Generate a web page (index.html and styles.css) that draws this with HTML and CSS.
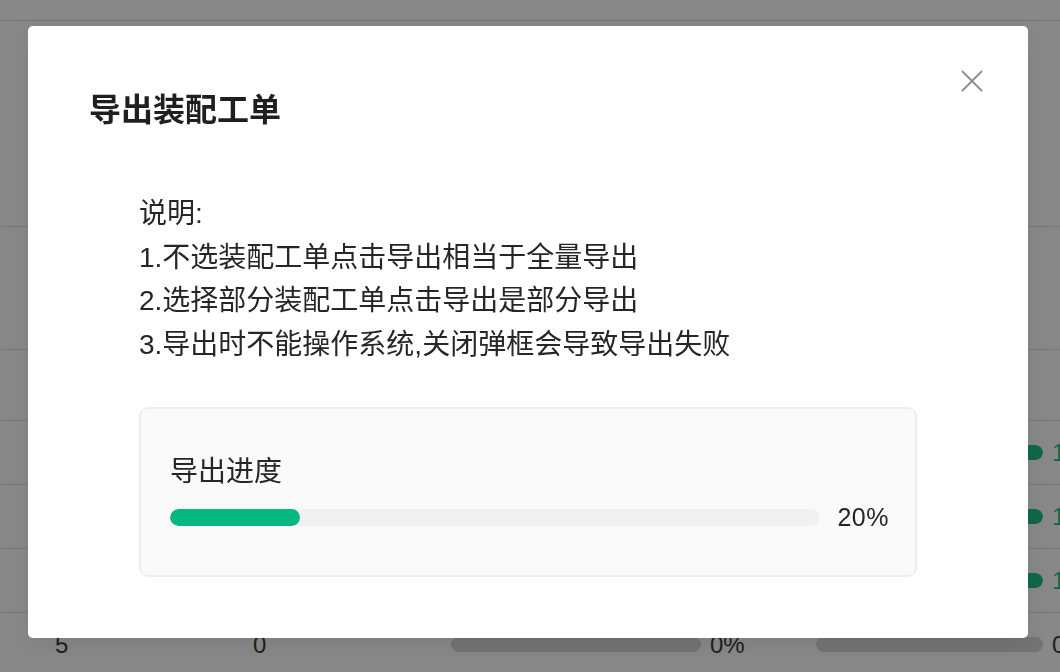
FILE: index.html
```html
<!DOCTYPE html>
<html lang="zh-CN">
<head>
<meta charset="utf-8">
<title>导出装配工单</title>
<link rel="stylesheet" href="styles.css">
</head>
<body>
<div class="page">
  <div class="table">
    <div class="row row-top"></div>
    <div class="row row-a"></div>
    <div class="row row-b"></div>
    <div class="row row-c"></div>
    <div class="row">
      <span class="cell"></span><span class="cell"></span>
      <span class="bar"><span class="bar-fill" style="width:100%"></span></span><span class="pct done"></span>
      <span class="bar"><span class="bar-fill" style="width:100%"></span></span><span class="pct done">100%</span>
    </div>
    <div class="row">
      <span class="cell"></span><span class="cell"></span>
      <span class="bar"><span class="bar-fill" style="width:100%"></span></span><span class="pct done"></span>
      <span class="bar"><span class="bar-fill" style="width:100%"></span></span><span class="pct done">100%</span>
    </div>
    <div class="row">
      <span class="cell"></span><span class="cell"></span>
      <span class="bar"><span class="bar-fill" style="width:100%"></span></span><span class="pct done"></span>
      <span class="bar"><span class="bar-fill" style="width:100%"></span></span><span class="pct done">100%</span>
    </div>
    <div class="row">
      <span class="cell">5</span><span class="cell">0</span>
      <span class="bar"><span class="bar-fill" style="width:0%"></span></span><span class="pct">0%</span>
      <span class="bar"><span class="bar-fill" style="width:0%"></span></span><span class="pct">0%</span>
    </div>
  </div>
</div>

<div class="mask"></div>

<div class="dialog">
  <button class="close" aria-label="关闭">
    <svg width="22" height="22" viewBox="0 0 22 22"><path d="M1.5 1.5 L20.5 20.5 M20.5 1.5 L1.5 20.5" stroke="#8c8c8c" stroke-width="1.8" fill="none" stroke-linecap="round"/></svg>
  </button>
  <h2 class="dialog-title">导出装配工单</h2>
  <div class="dialog-body">
    <div class="notes">
      <p>说明:</p>
      <p>1.不选装配工单点击导出相当于全量导出</p>
      <p>2.选择部分装配工单点击导出是部分导出</p>
      <p>3.导出时不能操作系统,关闭弹框会导致导出失败</p>
    </div>
    <div class="progress-box">
      <div class="progress-label">导出进度</div>
      <div class="progress-row">
        <div class="track"><div class="fill" style="width:20%"></div></div>
        <span class="progress-pct">20%</span>
      </div>
    </div>
  </div>
</div>
</body>
</html>
```

FILE: styles.css
```css
* { box-sizing: border-box; }

html, body {
  margin: 0;
  padding: 0;
  width: 1060px;
  height: 672px;
  overflow: hidden;
  background: #ffffff;
  font-family: "Liberation Sans", "Noto Sans CJK SC", sans-serif;
}

.page {
  width: 1060px;
  height: 672px;
}

.table {
  display: flex;
  flex-direction: column;
}

.row {
  height: 64px;
  border-bottom: 1px solid #e1e1e1;
  display: grid;
  grid-template-columns: 198px 198px 250px 115px 227px 1fr;
  align-items: center;
  padding-left: 55px;
  font-size: 24px;
  color: #3a3a3a;
  flex-shrink: 0;
}

.row-top { height: 21px; }
.row-a { height: 206px; }
.row-b { height: 123px; }
.row-c { height: 71px; }

.bar {
  height: 15px;
  border-radius: 8px;
  background: #d9d9d9;
  overflow: hidden;
  display: block;
}

.bar-fill {
  display: block;
  height: 100%;
  background: #1dc687;
  border-radius: 8px;
}

.pct {
  padding-left: 9px;
  white-space: nowrap;
  overflow: hidden;
}

.pct.done { color: #1dc687; }

.mask {
  position: fixed;
  inset: 0;
  background: rgba(0, 0, 0, 0.465);
}

.dialog {
  position: absolute;
  left: 28px;
  top: 26px;
  width: 1000px;
  height: 612px;
  background: #ffffff;
  border-radius: 5px;
  padding: 64px 61px 61px;
  box-shadow: 0 6px 24px rgba(0, 0, 0, 0.08);
}

.close {
  position: absolute;
  top: 44px;
  right: 45px;
  width: 22px;
  height: 22px;
  padding: 0;
  border: 0;
  background: transparent;
  display: flex;
}

.dialog-title {
  margin: 0;
  font-size: 32px;
  line-height: 40px;
  font-weight: 700;
  color: #1f1f1f;
}

.dialog-body {
  margin: 62px 50px 0;
}

.notes {
  font-size: 28px;
  line-height: 43.5px;
  color: #262626;
}

.notes p { margin: 0; }

.progress-box {
  margin-top: 41px;
  height: 170px;
  border: 2px solid #eeeeee;
  border-radius: 9px;
  background: #fafafa;
  padding: 45px 26px 42px 29px;
}

.progress-label {
  font-size: 28px;
  line-height: 36px;
  color: #262626;
}

.progress-row {
  margin-top: 12px;
  height: 31px;
  display: flex;
  align-items: center;
}

.track {
  flex: 1;
  height: 17px;
  border-radius: 9px;
  background: #f1f1f1;
  overflow: hidden;
}

.fill {
  height: 100%;
  background: #05b87f;
  border-radius: 9px;
}

.progress-pct {
  margin-left: 17px;
  font-size: 25px;
  line-height: 31px;
  color: #262626;
  letter-spacing: 0.5px;
}
```
